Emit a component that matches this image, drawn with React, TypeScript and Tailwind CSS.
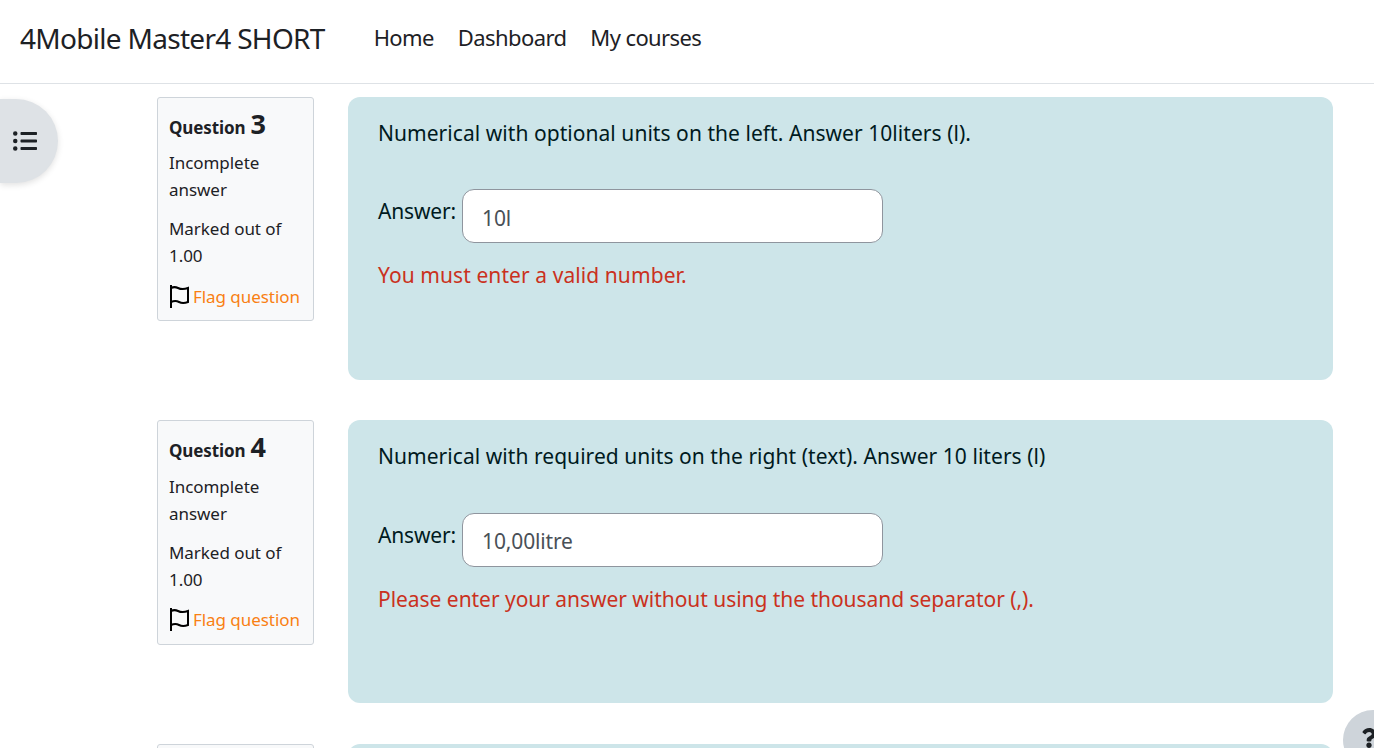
import { FaListUl, FaQuestion } from 'react-icons/fa'

interface Question {
  number: number
  prompt: string
  answer: string
  error: string
  errorClass: string
}

const questions: Question[] = [
  {
    number: 3,
    prompt: 'Numerical with optional units on the left. Answer 10liters (l).',
    answer: '10l',
    error: 'You must enter a valid number.',
    errorClass: 'tracking-[0.08px]',
  },
  {
    number: 4,
    prompt: 'Numerical with required units on the right (text). Answer 10 liters (l)',
    answer: '10,00litre',
    error: 'Please enter your answer without using the thousand separator (,).',
    errorClass: 'tracking-[-0.04px]',
  },
]

function FlagIcon() {
  return (
    <svg viewBox="0 0 21 23" className="h-[23px] w-[21px] shrink-0" fill="none" stroke="#000" strokeWidth="2">
      <path d="M2 0v23" />
      <path d="M2 3c3-1.500 5-1 7 0s6 1.500 10 0v14c-4 1.500-7 1-9 0s-5-1.200-8 0" />
    </svg>
  )
}

function QuestionInfo({ number }: { number: number }) {
  return (
    <div className="h-[224.4px] w-[157px] shrink-0 rounded-[3px] border border-[#ced4da] bg-[#f8f9fa] px-[11px] pt-[9px] text-[17px] leading-[27px] tracking-[-0.05px] text-[#1d2125]">
      <div className="flex h-[34px] items-baseline font-bold tracking-[-0.1px]">
        Question <span className="ml-[5px] text-[27px] leading-[34px]">{number}</span>
      </div>
      <div className="mt-[8.3px]">Incomplete answer</div>
      <div className="mt-[12px]">Marked out of 1.00</div>
      <div className="mt-[13.7px] flex items-center gap-[3px]">
        <FlagIcon />
        <span className="text-[#f98012]">Flag question</span>
      </div>
    </div>
  )
}

function QuestionRow({ question }: { question: Question }) {
  return (
    <div className="flex gap-[34px]">
      <QuestionInfo number={question.number} />
      <div className="h-[283px] flex-1 rounded-[12px] bg-[#cde5e9] pl-[30px] pt-[21px] text-[21px] tracking-[0.05px] text-[#001a1e]">
        <div className="h-[30px] leading-[30px]">{question.prompt}</div>
        <div className="mt-[41.2px] flex items-start gap-[6px]">
          <span className="leading-[45.7px] tracking-[-0.15px]">Answer:</span>
          <input
            readOnly
            value={question.answer}
            className="h-[54.2px] w-[421px] rounded-[12px] border border-[#8f959e] bg-white px-[19px] pt-[3px] text-[21px] tracking-[-0.15px] text-[#495057] outline-none"
          />
        </div>
        <div className="mt-[16.8px] leading-[30px]">
          <span className={`text-[#ca3120] ${question.errorClass}`}>{question.error}</span>
        </div>
      </div>
    </div>
  )
}

export default function App() {
  return (
    <div className="relative h-[748px] w-[1374px] overflow-hidden bg-white font-['Noto_Sans',sans-serif]">
      <header className="flex h-[84px] items-center border-b border-[#dee2e6] pb-[8px] pl-[20px] text-[#1d2125]">
        <div className="mr-[49px] text-[28px] tracking-[-0.7px]">4Mobile Master4 SHORT</div>
        <nav className="flex gap-[24px] text-[22px] tracking-[-0.6px]">
          <a>Home</a>
          <a>Dashboard</a>
          <a>My courses</a>
        </nav>
      </header>

      <main className="flex flex-col gap-[40.4px] pl-[157px] pr-[41px] pt-[13px]">
        {questions.map((q) => (
          <QuestionRow key={q.number} question={q} />
        ))}
        {/* next question, only its top edge is on screen */}
        <div className="flex gap-[34px]">
          <div className="h-[224.4px] w-[157px] shrink-0 rounded-[3px] border border-[#ced4da] bg-[#f8f9fa]" />
          <div className="h-[283px] flex-1 rounded-[12px] bg-[#cde5e9]" />
        </div>
      </main>

      <button className="absolute left-0 top-[99px] flex h-[84px] w-[58px] items-center justify-center rounded-r-full bg-[#dee2e6] pr-[8px] text-[#1d2125] shadow-[0_2px_6px_rgba(0,0,0,0.12)]">
        <FaListUl className="h-[24px] w-[24px]" />
      </button>

      <button className="absolute left-[1343px] top-[710px] flex h-[60px] w-[60px] items-center justify-center rounded-full bg-[#ced4da] pb-[4px] pr-[8px] text-[#1d2125]">
        <FaQuestion className="h-[20px] w-[20px]" />
      </button>
    </div>
  )
}
